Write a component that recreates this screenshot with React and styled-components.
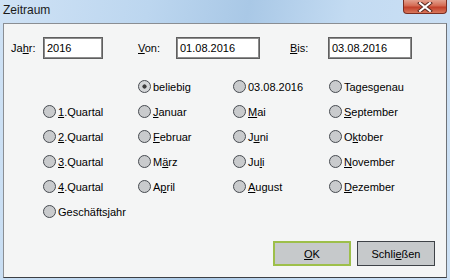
import React from 'react'
import styled, { createGlobalStyle } from 'styled-components'

const GlobalStyle = createGlobalStyle`
    html, body {
        margin: 0;
        padding: 0;
        width: 450px;
        height: 280px;
        overflow: hidden;
    }
    #root {
        width: 450px;
        height: 280px;
    }
`

const rows = [
    [null, { t: 'beliebig', checked: true }, { t: '03.08.2016' }, { t: 'Tagesgenau' }],
    [{ t: '1.Quartal', u: 0 }, { t: 'Januar', u: 0 }, { t: 'Mai', u: 0 }, { t: 'September', u: 0 }],
    [{ t: '2.Quartal', u: 0 }, { t: 'Februar', u: 0 }, { t: 'Juni', u: 1 }, { t: 'Oktober', u: 1 }],
    [{ t: '3.Quartal', u: 0 }, { t: 'März', u: 1 }, { t: 'Juli', u: 2 }, { t: 'November', u: 0 }],
    [{ t: '4.Quartal', u: 0 }, { t: 'April', u: 1 }, { t: 'August', u: 0 }, { t: 'Dezember', u: 0 }],
    [{ t: 'Geschäftsjahr' }, null, null, null],
]

// underline the access key letter
const Label = ({ text, u }) => {
    if (u === undefined) return <>{text}</>
    return (
        <>
            {text.slice(0, u)}
            <Key>{text[u]}</Key>
            {text.slice(u + 1)}
        </>
    )
}

const App = () => {
    return (
        <Window>
            <GlobalStyle />
            <TitleBar>
                <Title>Zeitraum</Title>
                <CloseButton>
                    <svg width="16" height="10" viewBox="0 0 16 10">
                        <path d="M3 1 L13 9 M13 1 L3 9" stroke="#5a2a22" strokeWidth="4" strokeLinecap="square" />
                        <path d="M3 1 L13 9 M13 1 L3 9" stroke="#ffffff" strokeWidth="2" strokeLinecap="square" />
                    </svg>
                </CloseButton>
            </TitleBar>
            <Client>
                <FieldRow>
                    <Field>
                        <FieldLabel width={32}><Label text="Jahr:" u={2} /></FieldLabel>
                        <TextBox width={60}>2016</TextBox>
                    </Field>
                    <Field>
                        <FieldLabel width={38}><Label text="Von:" u={0} /></FieldLabel>
                        <TextBox width={84}>01.08.2016</TextBox>
                    </Field>
                    <Field>
                        <FieldLabel width={38}><Label text="Bis:" u={0} /></FieldLabel>
                        <TextBox width={84}>03.08.2016</TextBox>
                    </Field>
                </FieldRow>
                <RadioGrid>
                    {rows.flat().map((item, i) =>
                        item ? (
                            <RadioItem key={i}>
                                <Radio checked={item.checked} />
                                <RadioText><Label text={item.t} u={item.u} /></RadioText>
                            </RadioItem>
                        ) : (
                            <span key={i} />
                        )
                    )}
                </RadioGrid>
                <ButtonRow>
                    <Button primary><Key>O</Key>K</Button>
                    <Button>Schli<Key>e</Key>ßen</Button>
                </ButtonRow>
            </Client>
        </Window>
    )
}

const Window = styled.div`
    width: 450px;
    height: 280px;
    box-sizing: border-box;
    display: flex;
    flex-direction: column;
    padding: 0 3px 2px 3px;
    background: linear-gradient(100deg, #cfe2f5 0%, #bcd6ef 30%, #a9c8e6 50%, #c3dbf2 70%, #cde1f5 100%);
    font-family: "Liberation Sans", Arial, sans-serif;
`

const TitleBar = styled.div`
    height: 23px;
    display: flex;
    align-items: flex-start;
    justify-content: space-between;
`

const Title = styled.span`
    font-size: 12px;
    color: #1a1a1a;
    margin-top: 3px;
    margin-left: 0;
`

const CloseButton = styled.div`
    width: 44px;
    height: 14px;
    margin-right: 0;
    box-sizing: border-box;
    border: 1px solid #7a2e22;
    border-top: none;
    border-radius: 0 0 4px 4px;
    background: linear-gradient(180deg, #e3a08e 0%, #d46a52 45%, #c2402a 55%, #d8775c 100%);
    display: flex;
    align-items: center;
    justify-content: center;
`

const Client = styled.div`
    flex: 1;
    display: flex;
    flex-direction: column;
    box-sizing: border-box;
    background: #f4f5f5;
    border: 1px solid #8a8e93;
    border-right-color: #6e7277;
    border-bottom-color: #3c3f43;
    padding: 13px 11px 11px 7px;
    color: #000;
    font-size: 11px;
`

const FieldRow = styled.div`
    display: grid;
    grid-template-columns: 127px 152px auto;
    align-items: center;
`

const Field = styled.div`
    display: flex;
    align-items: center;
`

const FieldLabel = styled.span`
    width: ${({ width }) => width}px;
    font-size: 11px;
`

const TextBox = styled.div`
    width: ${({ width }) => width}px;
    height: 22px;
    box-sizing: border-box;
    border: 1px solid #5f5f5f;
    box-shadow: inset 0 0 0 1px #8c8c8c;
    background: #fff;
    padding: 0 3px;
    display: flex;
    align-items: center;
    font-size: 11px;
`

const RadioGrid = styled.div`
    display: grid;
    grid-template-columns: 95px 95px 96px 95px;
    grid-auto-rows: 25px;
    margin-top: 15px;
    margin-left: 32px;
`

const RadioItem = styled.div`
    display: flex;
    align-items: center;
`

const Radio = styled.span`
    width: 13px;
    height: 13px;
    box-sizing: border-box;
    border-radius: 50%;
    border: 1px solid #474b51;
    background: ${({ checked }) =>
        checked ? 'radial-gradient(circle, #3d3d3d 0 1.8px, #d4d6d8 2.4px)' : '#c9cbcd'};
    margin-right: 2px;
    flex: none;
`

const RadioText = styled.span`
    font-size: 11px;
    white-space: nowrap;
`

const Key = styled.span`
    text-decoration: underline;
`

const ButtonRow = styled.div`
    margin-top: auto;
    display: flex;
    justify-content: flex-end;
    gap: 6px;
`

const Button = styled.div`
    width: 78px;
    height: 25px;
    box-sizing: border-box;
    background: #c6c9cb;
    border: ${({ primary }) => (primary ? '2px solid #9dbf4a' : '1px solid #3e4247')};
    display: flex;
    align-items: center;
    justify-content: center;
    font-size: 11px;
    color: #000;
`

export default App
